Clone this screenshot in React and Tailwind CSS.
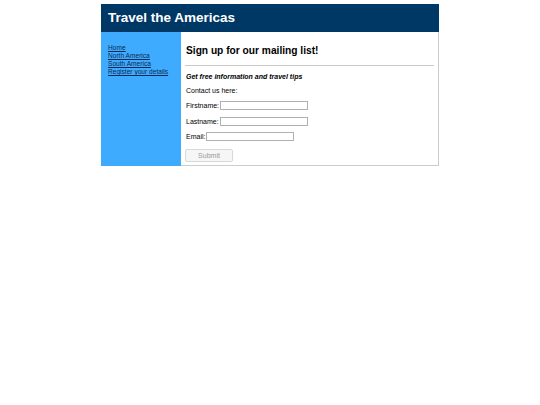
import React from "react";

const links = ["Home", "North America", "South America", "Register your details"];

export default function App() {
  return (
    <div className="min-h-[405px] bg-white font-['Liberation_Sans',Arial,sans-serif] text-black">
      <div className="mx-auto w-[338px] pt-[4px]">
        {/* Header */}
        <div className="flex h-[28px] items-center bg-[#003865] px-[7px]">
          <h1 className="text-[13.5px] font-bold leading-none text-white">Travel the Americas</h1>
        </div>

        <div className="flex">
          {/* Sidebar */}
          <nav className="w-[80px] shrink-0 bg-[#3fabff] px-[7px] pt-[12px]">
            {links.map((l) => (
              <a key={l} href="#" className="block text-[6.6px] leading-[8px] text-[#0a2a55] underline">
                {l}
              </a>
            ))}
          </nav>

          {/* Content */}
          <div className="flex-1 border-r border-b border-[#cccccc] pl-[5px] pr-[4px] pb-[3px]">
            <h2 className="mt-[12px] text-[10.2px] font-bold leading-[14px]">Sign up for our mailing list!</h2>
            <hr className="-ml-[1px] mt-[7px] border-t border-[#c8c8c8]" />
            <p className="mt-[6px] text-[7px] font-bold italic leading-[9px]">Get free information and travel tips</p>
            <p className="mt-[5px] text-[7px] leading-[9px]">Contact us here:</p>
            <form className="mt-[6px] flex flex-col gap-[6.5px] text-[7px] leading-[9px]">
              <label className="flex items-center gap-[1px]">
                Firstname:
                <input className="h-[9px] w-[88px] border border-[#b0b0b0]" />
              </label>
              <label className="flex items-center gap-[1px]">
                Lastname:
                <input className="h-[9px] w-[88px] border border-[#b0b0b0]" />
              </label>
              <label className="flex items-center gap-[1px]">
                Email:
                <input className="h-[9px] w-[88px] border border-[#b0b0b0]" />
              </label>
              <div className="-ml-[1px] mt-[1px]">
                <button
                  type="button"
                  className="h-[13px] w-[48px] rounded-[2px] border border-[#d8d8d8] bg-[#f6f6f6] text-[7px] font-normal text-[#999]"
                >
                  Submit
                </button>
              </div>
            </form>
          </div>
        </div>
      </div>
    </div>
  );
}
